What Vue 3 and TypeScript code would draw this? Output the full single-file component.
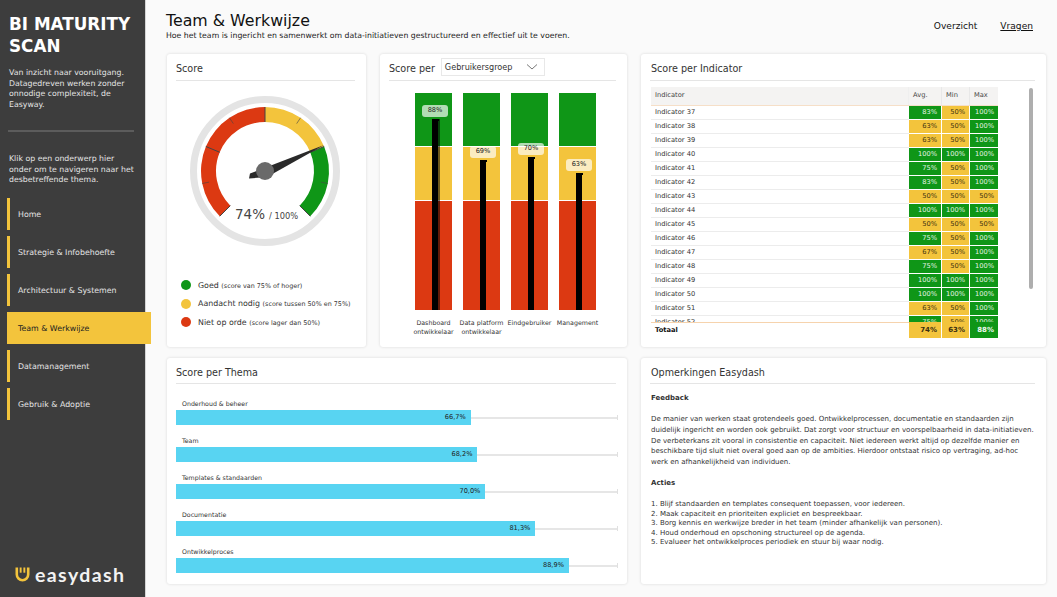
<script setup lang="ts">
const cx = 76, cy = 76
function pt(r: number, pct: number) {
  const a = ((-135 + pct * 2.7) * Math.PI) / 180
  return [(cx + r * Math.sin(a)).toFixed(2), (cy - r * Math.cos(a)).toFixed(2)]
}
function arc(p0: number, p1: number) {
  const R = 64, r = 49
  const [a, b] = pt(R, p0), [c, d] = pt(R, p1), [e, f] = pt(r, p1), [g, h] = pt(r, p0)
  const large = (p1 - p0) * 2.7 > 180 ? 1 : 0
  return `M${a} ${b}A${R} ${R} 0 ${large} 1 ${c} ${d}L${e} ${f}A${r} ${r} 0 ${large} 0 ${g} ${h}Z`
}
function tick(p: number, major: boolean) {
  const [a, b] = pt(64, p), [c, d] = pt(major ? 49 : 57, p)
  return { x1: a, y1: b, x2: c, y2: d, major }
}
const segments = [
  { d: arc(0, 50), c: '#dc3912' },
  { d: arc(50, 75), c: '#f3c43c' },
  { d: arc(75, 100), c: '#0f9617' },
]
const ticks = [0, 12.5, 25, 37.5, 50, 62.5, 75, 87.5, 100].map((p, i) => tick(p, i % 2 === 0))
const legend = [
  { c: '#0f9617', t: 'Goed', s: '(score van 75% of hoger)' },
  { c: '#f3c43c', t: 'Aandacht nodig', s: '(score tussen 50% en 75%)' },
  { c: '#dc3912', t: 'Niet op orde', s: '(score lager dan 50%)' },
]
const nav = ['Home', 'Strategie & Infobehoefte', 'Architectuur & Systemen', 'Team & Werkwijze', 'Datamanagement', 'Gebruik & Adoptie']
const groups = [
  { l: ['Dashboard', 'ontwikkelaar'], v: 88, top: 26, tag: 12, shade: true },
  { l: ['Data platform', 'ontwikkelaar'], v: 69, top: 67, tag: 53, shade: false },
  { l: ['Eindgebruiker'], v: 70, top: 64, tag: 50, shade: false },
  { l: ['Management'], v: 63, top: 80, tag: 66, shade: false },
]
const rows: [number, number, number, number][] = [
  [37, 83, 50, 100], [38, 63, 50, 100], [39, 63, 50, 100], [40, 100, 100, 100],
  [41, 75, 50, 100], [42, 83, 50, 100], [43, 50, 50, 50], [44, 100, 100, 100],
  [45, 50, 50, 50], [46, 75, 50, 100], [47, 67, 50, 100], [48, 75, 50, 100],
  [49, 100, 100, 100], [50, 100, 100, 100], [51, 63, 50, 100], [52, 75, 50, 100],
]
const cls = (v: number) => (v >= 75 ? 'good' : 'warn')
const themes = [
  { n: 'Onderhoud & beheer', v: 66.7 },
  { n: 'Team', v: 68.2 },
  { n: 'Templates & standaarden', v: 70.0 },
  { n: 'Documentatie', v: 81.3 },
  { n: 'Ontwikkelproces', v: 88.9 },
]
const fmt = (v: number) => v.toFixed(1).replace('.', ',') + '%'
</script>

<template>
  <div class="page">
    <aside class="side">
      <h1>BI MATURITY<br />SCAN</h1>
      <p class="intro">Van inzicht naar vooruitgang.<br />Datagedreven werken zonder<br />onnodige complexiteit, de<br />Easyway.</p>
      <div class="divider"></div>
      <p class="hint">Klik op een onderwerp hier<br />onder om te navigeren naar het<br />desbetreffende thema.</p>
      <nav class="menu">
        <a v-for="n in nav" :key="n" class="item" :class="{ active: n === 'Team & Werkwijze' }">{{ n }}</a>
      </nav>
      <div class="logo">
        <svg width="15" height="15" viewBox="0 0 15 15">
          <path d="M1.8 0.5V7.5A5.7 5.7 0 0 0 13.2 7.5V0.5" fill="none" stroke="#f3c43c" stroke-width="2.6" />
          <rect x="4.7" y="0.5" width="1.9" height="5.2" fill="#f3c43c" />
          <rect x="8.4" y="0.5" width="1.9" height="5.2" fill="#f3c43c" />
        </svg>
        <span>easydash</span>
      </div>
    </aside>

    <main class="main">
      <header class="top">
        <div>
          <h2>Team &amp; Werkwijze</h2>
          <p>Hoe het team is ingericht en samenwerkt om data-initiatieven gestructureerd en effectief uit te voeren.</p>
        </div>
        <div class="links">
          <a>Overzicht</a>
          <a class="u">Vragen</a>
        </div>
      </header>

      <section class="grid">
        <article class="card">
          <h3>Score</h3>
          <svg class="gauge" width="152" height="152" viewBox="0 0 152 152">
            <circle :cx="cx" :cy="cy" r="71.5" fill="none" stroke="#e4e4e4" stroke-width="7" />
            <path v-for="s in segments" :key="s.c" :d="s.d" :fill="s.c" />
            <line v-for="(t, i) in ticks" :key="i" :x1="t.x1" :y1="t.y1" :x2="t.x2" :y2="t.y2" stroke="#444" :stroke-width="t.major ? 1 : 0.6" />
            <polygon points="135,50 61,78.5 60,83.5 78,82" fill="#2a2a2a" />
            <circle :cx="cx" :cy="cy" r="9" fill="#6a6a6a" />
            <text x="61" y="124" class="g1" text-anchor="middle">74%</text>
            <text x="80" y="124" class="g2">/ 100%</text>
          </svg>
          <ul class="legend">
            <li v-for="l in legend" :key="l.t">
              <i :style="{ background: l.c }"></i>
              <span>{{ l.t }} <small>{{ l.s }}</small></span>
            </li>
          </ul>
        </article>

        <article class="card">
          <div class="per">
            <h3>Score per</h3>
            <div class="select">
              <span>Gebruikersgroep</span>
              <svg width="12" height="6" viewBox="0 0 12 6"><path d="M1 0.5L6 5L11 0.5" fill="none" stroke="#555" stroke-width="0.8" /></svg>
            </div>
          </div>
          <div class="bars">
            <div v-for="g in groups" :key="g.v" class="col">
              <div class="stack">
                <div class="s g"></div>
                <div class="s y"></div>
                <div class="s r"></div>
                <div class="bullet" :class="{ shade: g.shade }" :style="{ top: g.top + 'px' }"></div>
                <div class="tag" :style="{ top: g.tag + 'px' }">{{ g.v }}%</div>
              </div>
              <div class="lab"><span v-for="t in g.l" :key="t">{{ t }}</span></div>
            </div>
          </div>
        </article>

        <article class="card">
          <h3 class="ind">Score per Indicator</h3>
          <div class="table">
            <div class="thead">
              <span class="name">Indicator</span><span class="c1">Avg.</span><span class="c2">Min</span><span class="c3">Max</span>
            </div>
            <div class="tbody">
              <div v-for="r in rows" :key="r[0]" class="row">
                <span class="name">Indicator {{ r[0] }}</span>
                <span class="c1 num" :class="cls(r[1])">{{ r[1] }}%</span>
                <span class="c2 num" :class="cls(r[2])">{{ r[2] }}%</span>
                <span class="c3 num" :class="cls(r[3])">{{ r[3] }}%</span>
              </div>
            </div>
            <div class="tfoot">
              <span class="name">Totaal</span>
              <span class="c1 num warn">74%</span>
              <span class="c2 num warn">63%</span>
              <span class="c3 num good">88%</span>
            </div>
            <div class="scroll"></div>
          </div>
        </article>

        <article class="card wide low">
          <h3>Score per Thema</h3>
          <div class="themes">
            <div v-for="t in themes" :key="t.n" class="theme">
              <div class="tname">{{ t.n }}</div>
              <div class="track">
                <div class="fill" :style="{ width: t.v + '%' }">{{ fmt(t.v) }}</div>
              </div>
            </div>
          </div>
        </article>

        <article class="card low">
          <h3 class="ind">Opmerkingen Easydash</h3>
          <div class="notes">
            <h4>Feedback</h4>
            <p>De manier van werken staat grotendeels goed. Ontwikkelprocessen, documentatie en standaarden zijn<br />duidelijk ingericht en worden ook gebruikt. Dat zorgt voor structuur en voorspelbaarheid in data-initiatieven.<br />De verbeterkans zit vooral in consistentie en capaciteit. Niet iedereen werkt altijd op dezelfde manier en<br />beschikbare tijd sluit niet overal goed aan op de ambities. Hierdoor ontstaat risico op vertraging, ad-hoc<br />werk en afhankelijkheid van individuen.</p>
            <h4>Acties</h4>
            <p class="list">1. Blijf standaarden en templates consequent toepassen, voor iedereen.<br />2. Maak capaciteit en prioriteiten expliciet en bespreekbaar.<br />3. Borg kennis en werkwijze breder in het team (minder afhankelijk van personen).<br />4. Houd onderhoud en opschoning structureel op de agenda.<br />5. Evalueer het ontwikkelproces periodiek en stuur bij waar nodig.</p>
          </div>
        </article>
      </section>
    </main>
  </div>
</template>

<style>
html, body { margin: 0; background: #fafafa; }
</style>

<style scoped>
* { box-sizing: border-box; }
.page {
  display: flex;
  width: 1057px;
  height: 597px;
  overflow: hidden;
  background: #fafafa;
  font-family: "DejaVu Sans", sans-serif;
  color: #333;
}
.side {
  width: 146px;
  flex: none;
  background: #3d3d3d;
  border-right: 1px solid #d5d5d5;
  display: flex;
  flex-direction: column;
  color: #e4e4e4;
}
.side h1 {
  margin: 13px 0 0 9px;
  font-size: 16.8px;
  line-height: 22px;
  font-weight: 700;
  color: #fff;
  white-space: nowrap;
}
.intro, .hint {
  margin: 0 0 0 9px;
  font-size: 7.8px;
  line-height: 10.7px;
  white-space: nowrap;
}
.intro { margin-top: 11px; }
.divider { margin: 19px 11px 0 8px; height: 2px; background: #5c5c5c; }
.hint { margin-top: 22px; }
.menu { margin-top: 12px; display: flex; flex-direction: column; gap: 6px; padding-left: 7px; }
.item {
  height: 32px;
  width: 130px;
  border-left: 3px solid #f3c43c;
  padding: 1px 0 0 8px;
  display: flex;
  align-items: center;
  font-size: 7.85px;
  white-space: nowrap;
}
.item.active {
  width: 144px;
  background: #f3c43c;
  color: #222;
  position: relative;
  z-index: 2;
}
.logo {
  margin: auto 0 13px 15px;
  display: flex;
  align-items: center;
  gap: 5px;
  color: #f2f2f2;
  font-family: "Lato", sans-serif;
  font-size: 19.5px;
  font-weight: 700;
  letter-spacing: 1.4px;
  line-height: 20px;
}
.logo span { position: relative; top: 1px; }
.main { flex: 1; min-width: 0; padding-left: 21px; }
.top {
  height: 54px;
  display: flex;
  justify-content: space-between;
  padding-right: 24px;
}
.top h2 {
  margin: 10px 0 0 -1px;
  font-size: 15.8px;
  line-height: 22px;
  font-weight: 400;
  color: #111;
}
.top p { margin: 0 0 0 -1px; font-size: 7.77px; line-height: 8px; color: #222; white-space: nowrap; }
.links { display: flex; gap: 23px; font-size: 9.1px; color: #111; padding-top: 20px; line-height: 12px; }
.u { text-decoration: underline; }
.grid {
  display: grid;
  grid-template-columns: 199px 247px 405px;
  grid-template-rows: 293px 226px;
  column-gap: 14px;
  row-gap: 11px;
}
.card {
  background: #fff;
  border-radius: 3px;
  box-shadow: 0 0 3px rgba(0, 0, 0, 0.14);
  padding: 0 11px 0 9px;
  min-width: 0;
  position: relative;
}
.wide { grid-column: span 2; }
.card h3 {
  margin: 0;
  height: 27px;
  border-bottom: 1px solid #e5e5e5;
  font-size: 9.6px;
  line-height: 29px;
  font-weight: 400;
  color: #333;
}
.card h3.ind { padding-left: 1px; }
.low h3 { height: 26px; }
.gauge { display: block; margin: 14px 0 0 13px; }
.g1 { font-size: 13.5px; fill: #444; }
.g2 { font-size: 8.3px; fill: #444; }
.legend { list-style: none; margin: 32px 0 0 5px; padding: 0; display: flex; flex-direction: column; gap: 6.6px; }
.legend li { display: flex; align-items: center; gap: 7px; height: 12px; font-size: 7.9px; color: #333; white-space: nowrap; }
.legend i { width: 10px; height: 10px; border-radius: 50%; }
.legend small { font-size: 6.4px; }
.per { display: flex; align-items: flex-start; border-bottom: 1px solid #e5e5e5; height: 27px; gap: 6px; }
.per h3 { border: 0; height: 26px; }
.select {
  margin-top: 4px;
  width: 104px;
  height: 18px;
  border: 1px solid #e8e8e8;
  display: flex;
  align-items: center;
  justify-content: space-between;
  padding: 0 6px 0 3px;
  font-size: 8.15px;
  color: #333;
}
.bars { display: flex; gap: 11px; padding: 12px 0 0 26px; }
.col { width: 37px; display: flex; flex-direction: column; align-items: center; }
.stack { width: 37px; height: 217px; display: flex; flex-direction: column; position: relative; }
.s { width: 100%; }
.g { height: 53px; background: #0f9617; }
.y { height: 53px; background: #f3c43c; margin-top: 1px; }
.r { height: 109px; background: #dc3912; margin-top: 1px; }
.bullet {
  position: absolute;
  left: 17px;
  bottom: 0;
  width: 6px;
  background: #000;
  border-top: 2px solid #000;
}
.bullet::before { content: ""; position: absolute; left: -0.5px; top: -2px; width: 7px; height: 2px; background: #000; }
.bullet.shade { box-shadow: 2px 0 0 rgba(0, 0, 0, 0.55); }
.tag {
  position: absolute;
  left: 7px;
  width: 26px;
  height: 11.5px;
  border-radius: 3px;
  background: rgba(255, 255, 255, 0.68);
  font-size: 6.6px;
  line-height: 11.5px;
  text-align: center;
  color: #222;
}
.lab {
  width: 48px;
  margin-top: 7.5px;
  display: flex;
  flex-direction: column;
  align-items: center;
  font-size: 6.3px;
  line-height: 9px;
  color: #333;
  white-space: nowrap;
}
.table { position: relative; margin: 6px 0 0 1px; width: 394px; font-size: 6.7px; color: #333; }
.thead, .row, .tfoot { display: grid; grid-template-columns: 258px 33px 28px 28px; width: 347px; }
.thead {
  height: 19px;
  background: #f4f3f2;
  border-bottom: 1px solid #f6dfc8;
  line-height: 17px;
  color: #444;
}
.thead span { padding-left: 4px; border-right: 1px solid #e8e8e8; }
.thead .c3 { border-right: 0; }
.thead .name { border-right: 1px solid #efefef; }
.name { padding-left: 4px; white-space: nowrap; }
.tbody { height: 216px; overflow: hidden; }
.row { height: 14px; line-height: 13px; box-shadow: inset 0 -1px 0 #ececec; }
.num { text-align: right; padding-right: 4px; }
.c1.num, .c2.num { border-right: 1px solid #fff; }
.row .num { border-bottom: 1px solid #fff; }
.good { background: #0f9617; color: #e6f4e6; }
.warn { background: #f3c43c; color: #3a2f10; }
.tfoot {
  height: 15px;
  line-height: 16px;
  font-weight: 700;
  color: #111;
  box-shadow: inset 0 1px 0 #f6d3ad;
}
.tfoot .num { font-size: 7px; }
.tfoot .good { color: #f0f8f0; }
.scroll { position: absolute; left: 378px; top: 1px; width: 4px; height: 201px; border-radius: 2px; background: #aeaeae; }
.themes { margin-top: 11px; display: flex; flex-direction: column; gap: 7px; }
.theme { height: 30px; }
.tname { font-size: 6.25px; line-height: 17px; height: 15px; padding-left: 6px; color: #333; white-space: nowrap; }
.track {
  position: relative;
  width: 442px;
  height: 15px;
  background: linear-gradient(#e6e6e6, #e6e6e6) center / 100% 2px no-repeat;
}
.track::after {
  content: "";
  position: absolute;
  right: 0;
  top: 5px;
  width: 1px;
  height: 5px;
  background: #e0e0e0;
}
.fill {
  height: 15px;
  background: #58d4f2;
  font-size: 6.6px;
  line-height: 15px;
  text-align: right;
  padding-right: 5px;
  color: #222;
}
.notes { padding: 9px 0 0 0; font-size: 7.03px; line-height: 10.7px; color: #333; white-space: nowrap; }
.ind + .notes { padding-left: 1px; }
.notes h4 { margin: 0 0 10.5px; font-size: 7.03px; font-weight: 700; }
.notes p { margin: 0 0 10.5px; }
.notes p.list { line-height: 9.5px; }
</style>
